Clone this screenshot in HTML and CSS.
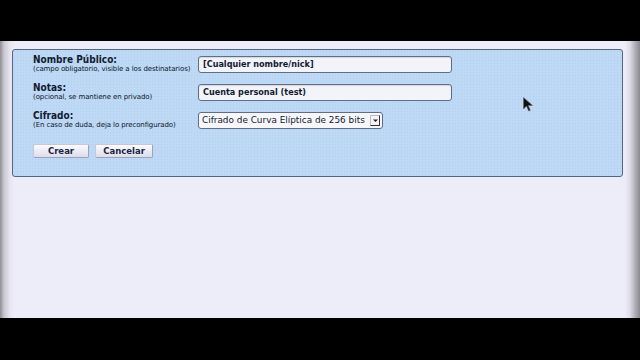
FILE: index.html
```html
<!DOCTYPE html>
<html lang="es">
<head>
    <meta charset="UTF-8">
    <title>Nueva identidad</title>
    <link rel="stylesheet" href="styles.css">
</head>
<body>
    <div class="screen">
        <div class="panel">
            <div class="row">
                <div class="label">
                    <div class="title">Nombre Público:</div>
                    <div class="hint">(campo obligatorio, visible a los destinatarios)</div>
                </div>
                <div class="input wide">[Cualquier nombre/nick]</div>
            </div>
            <div class="row">
                <div class="label">
                    <div class="title">Notas:</div>
                    <div class="hint">(opcional, se mantiene en privado)</div>
                </div>
                <div class="input wide">Cuenta personal (test)</div>
            </div>
            <div class="row">
                <div class="label">
                    <div class="title">Cifrado:</div>
                    <div class="hint">(En caso de duda, deja lo preconfigurado)</div>
                </div>
                <div class="select">
                    <span>Cifrado de Curva Elíptica de 256 bits</span>
                    <span class="arrow"><svg width="7" height="5" viewBox="0 0 7 5"><path d="M1 1.5h5L3.5 4z" fill="#222"/></svg></span>
                </div>
            </div>
            <div class="buttons">
                <button class="btn crear">Crear</button>
                <button class="btn cancelar">Cancelar</button>
            </div>
        </div>
        <svg class="cursor" width="10" height="15" viewBox="0 0 10 15">
            <path d="M0.5 0.5v11.5l3-3 2.2 5 1.6-.7-2.1-4.9h4.3z" fill="#111" stroke="#666" stroke-width="0.6"/>
        </svg>
    </div>
</body>
</html>
```

FILE: styles.css
```css
body {
    margin: 0;
    background-color: #000;
    font-family: "DejaVu Sans", Verdana, sans-serif;
    color: #121a30;
}

.screen {
    position: relative;
    margin-top: 41px;
    height: 277px;
    background: linear-gradient(to right, #8d8c92 0, #c9c8d0 4px, #e6e5f1 10px, #edecf9 14px, #edecf9 625px, #dcdbe6 630px, #a9a8b0 636px, #8a8990 640px);
    padding-top: 8px;
    box-sizing: border-box;
    overflow: hidden;
}

.panel {
    margin-left: 12px;
    width: 611px;
    height: 128px;
    box-sizing: border-box;
    border: 1px solid #56657e;
    border-radius: 3px;
    background-color: #bdd9f6;
    background-image: radial-gradient(#b3cfee 30%, transparent 31%);
    background-size: 3px 3px;
    padding: 0 0 0 20px;
}

.row {
    display: flex;
    align-items: center;
    height: 28px;
}

.label {
    width: 165px;
}

.title {
    font-family: "DejaVu Sans Condensed", "DejaVu Sans", sans-serif;
    font-stretch: condensed;
    font-weight: bold;
    font-size: 10px;
    line-height: 11px;
}

.hint {
    font-size: 7px;
    line-height: 9px;
    letter-spacing: -0.1px;
    color: #0e1528;
}

.input {
    height: 17px;
    box-sizing: border-box;
    border: 1px solid #5f6d86;
    border-radius: 3px;
    background: #f3f4f9;
    box-shadow: inset 0 1px 1px rgba(0,0,0,0.12);
    font-size: 8.1px;
    font-weight: bold;
    line-height: 15px;
    padding-left: 4px;
}

.input.wide {
    width: 254px;
}

.select {
    width: 185px;
    height: 17px;
    box-sizing: border-box;
    border: 1px solid #5f6d86;
    border-radius: 3px;
    background: #f7f7fb;
    font-size: 8.9px;
    line-height: 15px;
    padding-left: 3px;
    display: flex;
    justify-content: space-between;
    align-items: center;
}

.arrow {
    width: 10px;
    height: 11px;
    margin-right: 2px;
    border: 1px solid #b8bcc8;
    border-right-color: #333;
    border-bottom-color: #333;
    box-sizing: border-box;
    background: #f4f4f6;
    display: flex;
    align-items: center;
    justify-content: center;
}

.buttons {
    display: flex;
    gap: 6px;
    margin-top: 10px;
}

.btn {
    height: 14px;
    padding: 0;
    border: 1px solid #c6c8d6;
    border-bottom-color: #9ea2b8;
    border-right-color: #9ea2b8;
    border-radius: 2px;
    background: linear-gradient(#fbfbfe, #dcdde9);
    font-family: "DejaVu Sans", Verdana, sans-serif;
    font-weight: bold;
    font-size: 8.5px;
    color: #1b2645;
    line-height: 12px;
}

.crear {
    width: 56px;
}

.cancelar {
    width: 58px;
}

.cursor {
    position: absolute;
    left: 523px;
    top: 56px;
}
```
